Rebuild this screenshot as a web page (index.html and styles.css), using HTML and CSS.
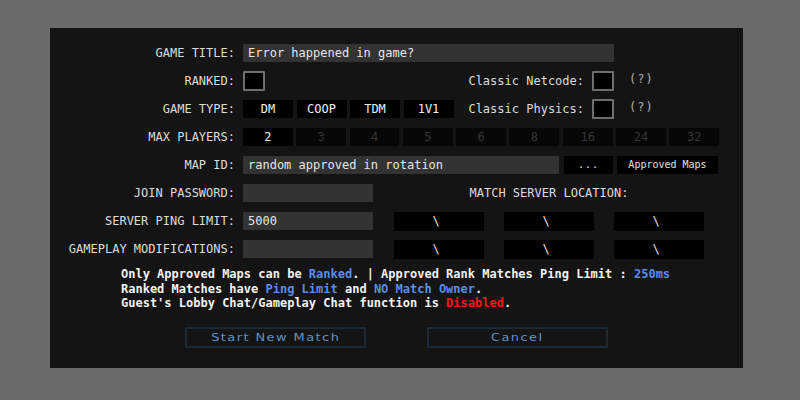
FILE: index.html
```html
<!DOCTYPE html>
<html>
<head>
<meta charset="utf-8">
<link rel="stylesheet" href="styles.css">
</head>
<body>
<div class="panel">
  <div class="form">
    <div class="row">
      <div class="label">GAME TITLE:</div>
      <div class="input title">Error happened in game?</div>
    </div>
    <div class="row">
      <div class="label">RANKED:</div>
      <div class="left"><div class="check"></div></div>
      <div class="rlabel">Classic Netcode:</div>
      <div class="check"></div>
      <div class="help">(?)</div>
    </div>
    <div class="row">
      <div class="label">GAME TYPE:</div>
      <div class="left">
        <div class="opts four">
          <div class="opt">DM</div>
          <div class="opt">COOP</div>
          <div class="opt">TDM</div>
          <div class="opt">1V1</div>
        </div>
      </div>
      <div class="rlabel">Classic Physics:</div>
      <div class="check"></div>
      <div class="help">(?)</div>
    </div>
    <div class="row">
      <div class="label">MAX PLAYERS:</div>
      <div class="opts nine">
        <div class="opt">2</div>
        <div class="opt dim">3</div>
        <div class="opt dim">4</div>
        <div class="opt dim">5</div>
        <div class="opt dim">6</div>
        <div class="opt dim">8</div>
        <div class="opt dim">16</div>
        <div class="opt dim">24</div>
        <div class="opt dim">32</div>
      </div>
    </div>
    <div class="row">
      <div class="label">MAP ID:</div>
      <div class="input map">random approved in rotation</div>
      <div class="btn dots">...</div>
      <div class="btn approved">Approved Maps</div>
    </div>
    <div class="row">
      <div class="label">JOIN PASSWORD:</div>
      <div class="input short"></div>
      <div class="loc-title">MATCH SERVER LOCATION:</div>
    </div>
    <div class="row">
      <div class="label">SERVER PING LIMIT:</div>
      <div class="input short">5000</div>
      <div class="locs">
        <div class="loc">\</div>
        <div class="loc">\</div>
        <div class="loc">\</div>
      </div>
    </div>
    <div class="row">
      <div class="label">GAMEPLAY MODIFICATIONS:</div>
      <div class="input short"></div>
      <div class="locs">
        <div class="loc">\</div>
        <div class="loc">\</div>
        <div class="loc">\</div>
      </div>
    </div>
  </div>
  <div class="notes">
    <div>Only Approved Maps can be <span class="blue">Ranked</span>. | Approved Rank Matches Ping Limit : <span class="blue">250ms</span></div>
    <div>Ranked Matches have <span class="blue">Ping Limit</span> and <span class="blue">NO Match Owner</span>.</div>
    <div>Guest's Lobby Chat/Gameplay Chat function is <span class="red">Disabled</span>.</div>
  </div>
  <div class="actions">
    <div class="action"><span class="atext">Start New Match</span></div>
    <div class="action"><span class="atext">Cancel</span></div>
  </div>
</div>
</body>
</html>
```

FILE: styles.css
```css
html, body {
  margin: 0;
  padding: 0;
}
body {
  background: #6b6b6b;
  width: 800px;
  height: 400px;
  overflow: hidden;
  font-family: "DejaVu Sans Mono", monospace;
  font-size: 12px;
  color: #dcdcdc;
}
.panel {
  margin: 28px 0 0 50px;
  width: 693px;
  height: 340px;
  background: #141414;
  box-sizing: border-box;
  padding-top: 16px;
}
.form {
  display: flex;
  flex-direction: column;
  gap: 10px;
}
.row {
  display: flex;
  align-items: center;
  height: 18px;
}
.label {
  width: 185px;
  margin-right: 8px;
  text-align: right;
  line-height: 18px;
  white-space: nowrap;
}
.input {
  height: 18px;
  line-height: 18px;
  background: #333333;
  color: #e6e6e6;
  padding-left: 5px;
  box-sizing: border-box;
  white-space: nowrap;
}
.title { width: 371px; }
.map { width: 316px; }
.short { width: 130px; }
.left {
  width: 215px;
  display: flex;
  align-items: center;
}
.check {
  width: 22px;
  height: 20px;
  box-sizing: border-box;
  border: 2px solid #6e6e6e;
  border-radius: 1px;
  background: #000;
}
.rlabel {
  width: 126px;
  margin-right: 8px;
  text-align: right;
  white-space: nowrap;
}
.help {
  margin-left: 15px;
  color: #b0b0b0;
  letter-spacing: 1px;
  margin-top: -4px;
}
.opts {
  display: grid;
  gap: 3.5px;
  height: 18px;
}
.four { grid-template-columns: repeat(4, 50px); }
.nine { grid-template-columns: repeat(9, 49.8px); }
.opt {
  background: #000;
  color: #eeeeee;
  text-align: center;
  line-height: 18px;
}
.opt.dim {
  background: #070707;
  color: #363636;
}
.btn {
  height: 18px;
  line-height: 18px;
  background: #000;
  text-align: center;
  color: #e0e0e0;
}
.dots {
  width: 49px;
  margin-left: 5px;
  font-size: 10px;
  letter-spacing: 1px;
}
.approved {
  width: 101px;
  margin-left: 4px;
  font-size: 10px;
}
.loc-title {
  width: 310px;
  margin-left: 21px;
  text-align: center;
  white-space: nowrap;
}
.locs {
  margin-left: 21px;
  display: grid;
  grid-template-columns: repeat(3, 90px);
  gap: 20px;
}
.loc {
  height: 19px;
  line-height: 19px;
  background: #000;
  color: #e0e0e0;
  text-align: center;
  padding-right: 6px;
}
.notes {
  margin: 9px 0 0 71px;
  font-weight: bold;
  line-height: 14.5px;
  color: #f2f2f2;
  white-space: nowrap;
}
.blue { color: #5a8ee6; }
.red { color: #ff1414; }
.actions {
  display: flex;
  gap: 61px;
  margin: 16px 0 0 135px;
}
.action {
  width: 181px;
  height: 21px;
  box-sizing: border-box;
  border: 2px solid #1c2a38;
  border-radius: 1px;
  display: flex;
  align-items: center;
  justify-content: center;
}
.atext {
  display: inline-block;
  font-family: "DejaVu Sans", sans-serif;
  font-size: 11px;
  letter-spacing: 1.2px;
  color: #5d93c6;
  transform: scaleX(1.18);
}
```
